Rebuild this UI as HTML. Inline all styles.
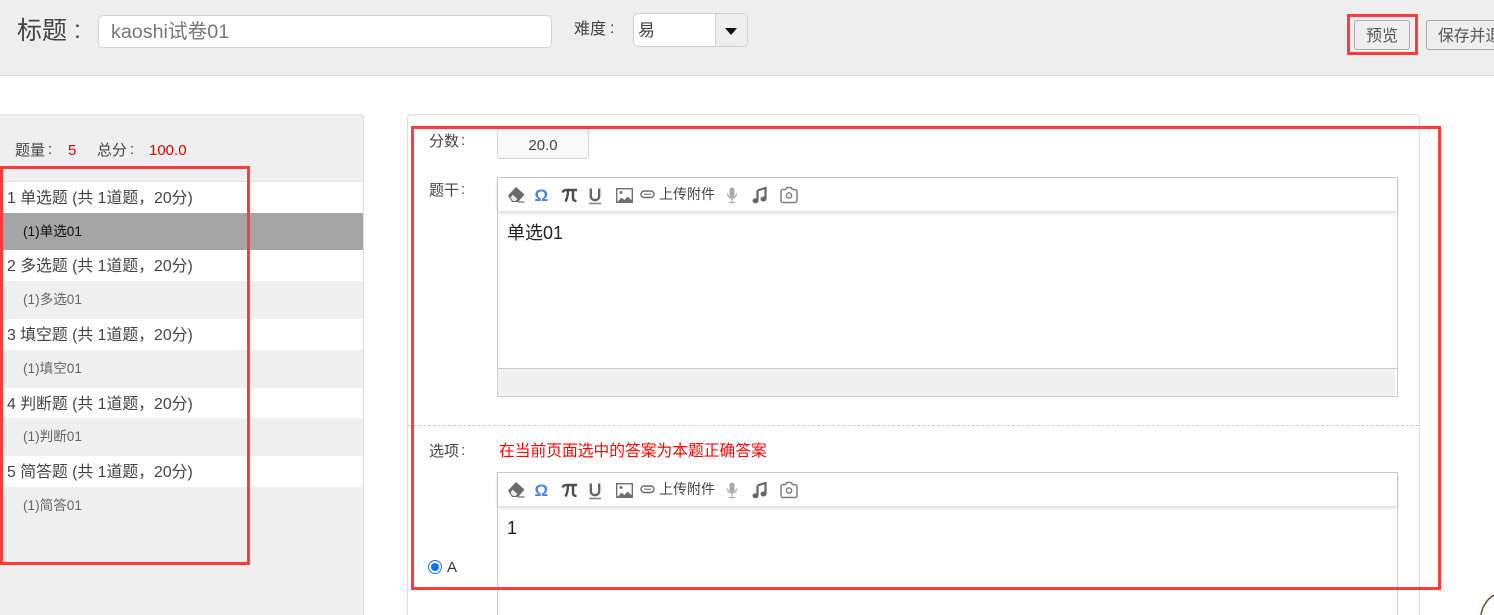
<!DOCTYPE html>
<html lang="zh"><head><meta charset="utf-8"><title>试卷</title>
<style>
html,body{margin:0;padding:0;width:1494px;height:615px;overflow:hidden;background:#fff}
body{position:relative;font-family:"Liberation Sans","Noto Sans CJK SC",sans-serif;color:#555}
.a{position:absolute;box-sizing:border-box}
.t{position:absolute;white-space:nowrap;line-height:20px}
.r{position:absolute;box-sizing:border-box;border:3px solid #ff3b3b;z-index:10}
.row{position:absolute;left:0;width:363px;box-sizing:border-box;white-space:nowrap}
.h{background:#fff;height:31px;line-height:33px;font-size:15.850px;padding-left:7px;color:#444}
.q{height:38px;line-height:38px;font-size:13.600px;padding-left:23px;color:#666}
.ed{position:absolute;left:497px;width:901px;box-sizing:border-box;border:1px solid #ccc;background:#fff}
.tb{position:absolute;left:0;top:0;right:0;height:33px;background:#fff;box-shadow:0 2px 4px rgba(0,0,0,.16)}
.tb svg{position:absolute;left:0;top:0}
.tb span{position:absolute;left:161px;top:6px;font-size:14px;line-height:20px;color:#444;white-space:nowrap}
</style></head><body>

<div class="a" style="left:0;top:0;width:1494px;height:76px;background:#eee;border-bottom:1px solid #d9d9d9"></div>
<div class="t" style="left:17px;top:15px;font-size:25px;line-height:32px;color:#444">标题<span style="position:absolute;left:57px;top:-1px">:</span></div>
<div class="a" style="left:98px;top:15px;width:454px;height:33px;background:#fff;border:1px solid #d4d4d4;border-radius:5px;font-size:19.700px;line-height:33px;padding-left:12px;color:#777">kaoshi试卷01</div>
<div class="t" style="left:574px;top:20px;font-size:16px;color:#444">难度<span style="position:absolute;left:36px;top:-1px">:</span></div>
<div class="a" style="left:633px;top:13px;width:115px;height:34px;background:#fff;border:1px solid #d0d0d0;border-radius:5px;overflow:hidden">
  <div class="t" style="left:4px;top:7px;font-size:17px;color:#444">易</div>
  <div class="a" style="left:81px;top:0;width:33px;height:32px;background:#eee;border-left:1px solid #d0d0d0"></div>
  <div class="a" style="left:91px;top:14px;width:0;height:0;border-left:6.500px solid transparent;border-right:6.500px solid transparent;border-top:7px solid #111"></div>
</div>
<div class="a" style="left:1354px;top:20px;width:56px;height:30px;border:1px solid #aaa;border-radius:3px;font-size:16px;line-height:31px;text-align:center;color:#555">预览</div>
<div class="a" style="left:1426px;top:20px;width:90px;height:30px;border:1px solid #aaa;border-radius:3px;font-size:15.800px;line-height:31px;padding-left:11px;color:#555;white-space:nowrap;overflow:hidden">保存并退出</div>

<div class="a" style="left:-5px;top:114px;width:369px;height:510px;background:#efefef;border:1px solid #ddd;border-radius:3px"></div>
<div class="t" style="left:15px;top:141px;font-size:15px;color:#444">题量<span style="position:absolute;left:33px;top:-1px">:</span></div>
<div class="t" style="left:68px;top:141px;font-size:15px;color:#d00">5</div>
<div class="t" style="left:97px;top:141px;font-size:15px;color:#444">总分<span style="position:absolute;left:33px;top:-1px">:</span></div>
<div class="t" style="left:149px;top:141px;font-size:15px;color:#d00">100.0</div>
<div class="a" style="left:0;top:181px;width:363px;height:1px;background:#ddd"></div>
<div class="row h" style="top:182px">1 单选题 (共 1道题&#65292;20分)</div>
<div class="row q" style="top:213px;height:37px;background:#a5a5a5;color:#111">(1)单选01</div>
<div class="row h" style="top:250px">2 多选题 (共 1道题&#65292;20分)</div>
<div class="row q" style="top:281px">(1)多选01</div>
<div class="row h" style="top:319px">3 填空题 (共 1道题&#65292;20分)</div>
<div class="row q" style="top:350px">(1)填空01</div>
<div class="row h" style="top:388px;height:30px">4 判断题 (共 1道题&#65292;20分)</div>
<div class="row q" style="top:418px">(1)判断01</div>
<div class="row h" style="top:456px">5 简答题 (共 1道题&#65292;20分)</div>
<div class="row q" style="top:487px">(1)简答01</div>

<div class="a" style="left:407px;top:114px;width:1013px;height:520px;border:1px solid #ddd;border-radius:4px;background:#fff"></div>
<div class="t" style="left:429px;top:132px;font-size:15px;color:#444">分数<span style="position:absolute;left:32px;top:-1px">:</span></div>
<div class="a" style="left:497px;top:128px;width:92px;height:31px;background:#f8f8f8;border:1px solid #d4d4d4;border-radius:3px;font-size:15px;line-height:31px;padding-top:1px;text-align:center;color:#444">20.0</div>
<div class="t" style="left:429px;top:181px;font-size:15px;color:#444">题干<span style="position:absolute;left:32px;top:-1px">:</span></div>

<div class="ed" style="top:177px;height:220px">
  <div class="tb">
    <svg width="320" height="33" viewBox="0 0 320 33">
      <path d="M10 17.500l8-8.500 8.500 7.500-6.500 7.500h-6z" fill="#6a6a6a"/><path d="M14.500 16.500l5 4.500-2 2h-2.500l-2.500-3z" fill="#e8e8e8"/><path d="M20 24h6.500" stroke="#777" stroke-width="1.300"/>
      <text x="36.500" y="23" font-family="Liberation Sans" font-size="17" font-weight="bold" fill="#4a80ea">Ω</text>
      <path d="M64.500 14.500c1-2 2-2.500 4-2.500h10.500" fill="none" stroke="#4d4d4d" stroke-width="2.400"/><path d="M70 12c0 5-.5 8-2.500 11.500M75 12v8c0 2 1 3 3.500 3" fill="none" stroke="#4d4d4d" stroke-width="2.400"/>
      <path d="M92.800 10.500v7.500c0 5.500 8.400 5.500 8.400 0v-7.500" fill="none" stroke="#666" stroke-width="2.400"/><path d="M91 25.500h12" stroke="#888" stroke-width="1.600"/>
      <rect x="118.700" y="10.700" width="15.600" height="13.600" fill="none" stroke="#707070" stroke-width="1.400"/><path d="M119 24.500l4.500-5 3 2.500 3-3.500 5 4.500v1.500z" fill="#707070"/><circle cx="123" cy="14.500" r="1.500" fill="#707070"/>
      <rect x="143" y="13" width="13" height="6.500" rx="3.200" fill="none" stroke="#666" stroke-width="1.400"/><path d="M146 16.200h7" stroke="#666"/>
      <rect x="231.500" y="9.500" width="5" height="10" rx="2.500" fill="#aaa"/><path d="M229.500 15.500c0 6 9 6 9 0M234 20.500v3M231 24.500h6" fill="none" stroke="#aaa" stroke-width="1.200"/>
      <path d="M259.500 12.500l8-2.500v11M259.500 12.500v10" fill="none" stroke="#666" stroke-width="2.200"/><ellipse cx="257.500" cy="22.800" rx="3" ry="2.500" fill="#666"/><ellipse cx="265.500" cy="21" rx="3" ry="2.500" fill="#666"/>
      <path d="M285 11.500h2.500l1.500-2h4l1.500 2h2.500a2 2 0 0 1 2 2v9a2 2 0 0 1-2 2h-12a2 2 0 0 1-2-2v-9a2 2 0 0 1 2-2z" fill="none" stroke="#808080" stroke-width="1.500"/><circle cx="291" cy="17.500" r="2.600" fill="none" stroke="#808080" stroke-width="1.500"/>
    </svg>
    <span>上传附件</span>
  </div>
  <div class="t" style="left:9px;top:43px;font-size:18px;line-height:24px;color:#222">单选01</div>
  <div class="a" style="left:0;top:190px;width:897px;height:28px;background:#f0f0f0;border-top:1px solid #ccc"></div>
  <div class="a" style="left:0;top:190px;width:899px;height:1px;background:#ccc"></div>
</div>

<div class="a" style="left:408px;top:425px;width:1011px;height:0;border-top:1px dashed #ccc"></div>
<div class="t" style="left:429px;top:442px;font-size:15px;color:#444">选项<span style="position:absolute;left:32px;top:-1px">:</span></div>
<div class="t" style="left:499px;top:442px;font-size:15.760px;color:#f00">在当前页面选中的答案为本题正确答案</div>

<div class="ed" style="top:472px;height:170px">
  <div class="tb">
    <svg width="320" height="33" viewBox="0 0 320 33">
      <path d="M10 17.500l8-8.500 8.500 7.500-6.500 7.500h-6z" fill="#6a6a6a"/><path d="M14.500 16.500l5 4.500-2 2h-2.500l-2.500-3z" fill="#e8e8e8"/><path d="M20 24h6.500" stroke="#777" stroke-width="1.300"/>
      <text x="36.500" y="23" font-family="Liberation Sans" font-size="17" font-weight="bold" fill="#4a80ea">Ω</text>
      <path d="M64.500 14.500c1-2 2-2.500 4-2.500h10.500" fill="none" stroke="#4d4d4d" stroke-width="2.400"/><path d="M70 12c0 5-.5 8-2.500 11.500M75 12v8c0 2 1 3 3.500 3" fill="none" stroke="#4d4d4d" stroke-width="2.400"/>
      <path d="M92.800 10.500v7.500c0 5.500 8.400 5.500 8.400 0v-7.500" fill="none" stroke="#666" stroke-width="2.400"/><path d="M91 25.500h12" stroke="#888" stroke-width="1.600"/>
      <rect x="118.700" y="10.700" width="15.600" height="13.600" fill="none" stroke="#707070" stroke-width="1.400"/><path d="M119 24.500l4.500-5 3 2.500 3-3.500 5 4.500v1.500z" fill="#707070"/><circle cx="123" cy="14.500" r="1.500" fill="#707070"/>
      <rect x="143" y="13" width="13" height="6.500" rx="3.200" fill="none" stroke="#666" stroke-width="1.400"/><path d="M146 16.200h7" stroke="#666"/>
      <rect x="231.500" y="9.500" width="5" height="10" rx="2.500" fill="#aaa"/><path d="M229.500 15.500c0 6 9 6 9 0M234 20.500v3M231 24.500h6" fill="none" stroke="#aaa" stroke-width="1.200"/>
      <path d="M259.500 12.500l8-2.500v11M259.500 12.500v10" fill="none" stroke="#666" stroke-width="2.200"/><ellipse cx="257.500" cy="22.800" rx="3" ry="2.500" fill="#666"/><ellipse cx="265.500" cy="21" rx="3" ry="2.500" fill="#666"/>
      <path d="M285 11.500h2.500l1.500-2h4l1.500 2h2.500a2 2 0 0 1 2 2v9a2 2 0 0 1-2 2h-12a2 2 0 0 1-2-2v-9a2 2 0 0 1 2-2z" fill="none" stroke="#808080" stroke-width="1.500"/><circle cx="291" cy="17.500" r="2.600" fill="none" stroke="#808080" stroke-width="1.500"/>
    </svg>
    <span>上传附件</span>
  </div>
  <div class="t" style="left:9px;top:43px;font-size:18px;line-height:24px;color:#222">1</div>
</div>

<div class="a" style="left:428px;top:560px;width:14px;height:14px;border-radius:50%;border:1.500px solid #0a74ff;background:#fff"></div>
<div class="a" style="left:431px;top:563px;width:8px;height:8px;border-radius:50%;background:#0a74ff"></div>
<div class="t" style="left:447px;top:558px;font-size:15px;color:#333">A</div>

<svg class="a" style="left:1470px;top:585px" width="24" height="30" viewBox="0 0 24 30"><path d="M11 30c1-8 6-16 13-20" fill="none" stroke="#6b4c2e" stroke-width="1.500"/></svg>

<div class="r" style="left:1347px;top:14px;width:71px;height:41px"></div>
<div class="r" style="left:0;top:166px;width:250px;height:399px"></div>
<div class="r" style="left:411px;top:126px;width:1030px;height:464px"></div>
</body></html>
